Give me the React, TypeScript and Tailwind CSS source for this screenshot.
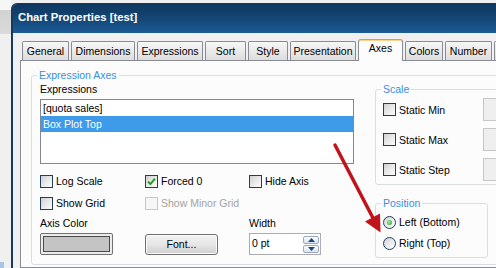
import clsx from 'clsx'

const tabs = [
  { label: 'General', width: 'w-[47px]' },
  { label: 'Dimensions', width: 'w-[64px]' },
  { label: 'Expressions', width: 'w-[66px]' },
  { label: 'Sort', width: 'w-[41px]' },
  { label: 'Style', width: 'w-[40px]' },
  { label: 'Presentation', width: 'w-[66px]' },
  { label: 'Axes', width: 'w-[45px]', active: true },
  { label: 'Colors', width: 'w-[38px]' },
  { label: 'Number', width: 'w-[47px]' },
  { label: '', width: 'w-[40px]' },
]

function Tab({ label, width, active }: { label: string; width: string; active?: boolean }) {
  if (active) {
    return (
      <div
        className={clsx(
          width,
          'relative -mb-px h-[22px] shrink-0 rounded-t-[3px] border-x border-t border-x-[#898c95] border-t-[#e39b33] bg-[#fcfcfc] text-center leading-[17px] shadow-[inset_0_1px_0_#fbd48c]'
        )}
      >
        {label}
      </div>
    )
  }
  return (
    <div
      className={clsx(
        width,
        'h-[19px] shrink-0 rounded-t-[2px] border-x border-t border-[#898c95] bg-gradient-to-b from-[#f7f7f7] to-[#dddddd] text-center leading-[18px]'
      )}
    >
      {label}
    </div>
  )
}

function CheckBox({ checked = false, disabled = false }: { checked?: boolean; disabled?: boolean }) {
  return (
    <span
      className={clsx(
        'flex h-[13px] w-[13px] shrink-0 items-center justify-center border',
        disabled
          ? 'border-[#c8c8c8] bg-[#f6f6f6]'
          : 'border-[#1d3f63] bg-gradient-to-br from-[#d0d0d0] via-[#e9e9e9] to-[#fdfdfd]'
      )}
    >
      {checked && (
        <svg width="9" height="9" viewBox="0 0 9 9">
          <path d="M1 4.6 L3.4 7 L8 1.6" fill="none" stroke="#1f9c1f" strokeWidth="1.9" />
        </svg>
      )}
    </span>
  )
}

function Radio({ checked = false }: { checked?: boolean }) {
  return (
    <span className="flex h-[13px] w-[13px] shrink-0 items-center justify-center rounded-full border border-[#1d3f63] bg-gradient-to-br from-[#d0d0d0] via-[#ececec] to-[#fdfdfd]">
      {checked && (
        <span className="h-[5px] w-[5px] rounded-full bg-[radial-gradient(circle_at_40%_40%,#9af29a,#1e9a1e)]" />
      )}
    </span>
  )
}

function Option({ label, checked, disabled }: { label: string; checked?: boolean; disabled?: boolean }) {
  return (
    <div className="flex h-[14px] items-center">
      <CheckBox checked={checked} disabled={disabled} />
      <span className={clsx('ml-[3px] leading-[14px]', disabled && 'text-[#a3a3a3]')}>{label}</span>
    </div>
  )
}

function SpinArrow({ up }: { up?: boolean }) {
  return (
    <span className="flex h-[8px] w-[16px] items-center justify-center rounded-[2px] border border-[#9aa9bd] bg-gradient-to-b from-white to-[#d8e2ee]">
      <svg width="7" height="4" viewBox="0 0 7 4">
        <polygon points={up ? '0,4 3.5,0 7,4' : '0,0 3.5,4 7,0'} fill="#1c4677" />
      </svg>
    </span>
  )
}

export default function App() {
  return (
    <div className="relative flex h-[268px] w-[496px] overflow-hidden bg-[#f0f0f0] font-['Liberation_Sans',Arial,sans-serif] text-[10.5px] text-black">
      {/* desktop behind the dialog */}
      <div className="flex w-[11px] shrink-0 flex-col">
        <div className="h-[10px] bg-[#f6f6f6]" />
        <div className="h-[24px] bg-gradient-to-b from-[#d2d2d2] to-[#dadada]" />
        <div className="flex flex-1 flex-col justify-end bg-[#f0f0f0]">
          <div className="h-[6px] w-[4px] bg-[#a7c5e4]" />
        </div>
      </div>

      {/* dialog window */}
      <div className="mt-[3px] flex w-[540px] shrink-0 flex-col rounded-tl-[6px] border-l-2 border-t border-[#17395f] bg-[#f0f0f0]">
        <div className="flex h-[29px] items-center rounded-tl-[4px] bg-gradient-to-b from-[#0e375f] via-[#144675] to-[#1c5b97] pb-[2px] pl-[5px] text-[11.3px] font-bold text-white">
          Chart Properties [test]
        </div>

        <div className="flex flex-1 flex-col pl-[7px] pt-[6px]">
          <div className="relative z-10 flex h-[21px] items-end gap-[2px] pl-[2px]">
            {tabs.map((t, i) => (
              <Tab key={i} label={t.label} width={t.width} active={t.active} />
            ))}
          </div>

          <div className="flex-1 border border-[#898c95] bg-[#fcfcfc] pl-[10px] pt-[7px]">
            <fieldset className="w-[500px] rounded-[3px] border border-[#d5dfe5] pb-[6px] pl-[8px]">
              <legend className="-ml-[3px] px-[2px] leading-[14px] text-[#3d8ee0]">Expression Axes</legend>
              <div className="flex">
                {/* left column */}
                <div className="w-[335px] shrink-0">
                  <div className="h-[14px] leading-[14px]">Expressions</div>
                  <div className="mt-[3px] h-[65px] w-[314px] border border-[#828790] bg-white">
                    <div className="h-[16px] px-[2px] leading-[16px]">[quota sales]</div>
                    <div className="h-[16px] bg-[#3d9be9] px-[2px] leading-[16px] text-white">Box Plot Top</div>
                  </div>

                  <div className="mt-[10px] grid grid-cols-[105px_104px_1fr]">
                    <Option label="Log Scale" />
                    <Option label="Forced 0" checked />
                    <Option label="Hide Axis" />
                  </div>
                  <div className="mt-[8px] grid grid-cols-[105px_104px_1fr]">
                    <Option label="Show Grid" />
                    <Option label="Show Minor Grid" disabled />
                  </div>
                  <div className="mt-[6px] grid grid-cols-[105px_104px_1fr] leading-[14px]">
                    <span>Axis Color</span>
                    <span />
                    <span>Width</span>
                  </div>
                  <div className="mt-[3px] grid grid-cols-[105px_104px_1fr]">
                    <div className="flex h-[22px] w-[73px] items-center justify-center rounded-[2px] border border-[#707070] bg-[#ececec] p-[2px]">
                      <div className="h-full w-full border border-[#4a4a4a] bg-[#c4c4c4]" />
                    </div>
                    <div className="mt-px flex h-[21px] w-[73px] items-center justify-center rounded-[3px] border border-[#707070] bg-gradient-to-b from-[#f3f3f3] via-[#e6e6e6] to-[#cfcfcf] shadow-[inset_0_0_0_1px_#fbfbfb]">
                      Font...
                    </div>
                    <div className="flex h-[22px] w-[72px] items-center border border-[#abadb3] bg-white">
                      <span className="flex-1 pb-[2px] pl-[2px] leading-[14px]">0 pt</span>
                      <div className="mr-px flex flex-col gap-px">
                        <SpinArrow up />
                        <SpinArrow />
                      </div>
                    </div>
                  </div>
                </div>

                {/* right column */}
                <div className="flex flex-col">
                  <fieldset className="w-[150px] rounded-[3px] border border-[#d5dfe5] pb-[3px] pl-[7px]">
                    <legend className="-ml-[2px] px-[2px] leading-[14px] text-[#3d8ee0]">Scale</legend>
                    <div className="mt-[2px] flex flex-col gap-[7px]">
                      {['Static Min', 'Static Max', 'Static Step'].map((s) => (
                        <div key={s} className="flex h-[23px] items-center">
                          <CheckBox />
                          <span className="ml-[3px] w-[84px] leading-[14px]">{s}</span>
                          <div className="h-[23px] w-[60px] border border-[#c6c6c6] bg-[#efefef]" />
                        </div>
                      ))}
                    </div>
                  </fieldset>

                  <fieldset className="mt-[11px] w-[113px] rounded-[3px] border border-[#d5dfe5] pb-[5px] pl-[7px]">
                    <legend className="-ml-[2px] px-[2px] leading-[14px] text-[#3d8ee0]">Position</legend>
                    <div className="mt-[3px] flex flex-col gap-[3px]">
                      <div className="flex h-[18px] items-center">
                        <Radio checked />
                        <span className="ml-[3px] leading-[14px]">Left (Bottom)</span>
                      </div>
                      <div className="flex h-[18px] items-center">
                        <Radio />
                        <span className="ml-[3px] leading-[14px]">Right (Top)</span>
                      </div>
                    </div>
                  </fieldset>
                </div>
              </div>
            </fieldset>
          </div>
        </div>
      </div>

      {/* red annotation arrow */}
      <svg className="pointer-events-none absolute left-0 top-0" width="496" height="268" viewBox="0 0 496 268">
        <line x1="335" y1="145" x2="373" y2="218" stroke="#c1131b" strokeWidth="3.5" strokeLinecap="round" />
        <polygon points="380.5,232.5 365,221.5 380,213.5" fill="#c1131b" />
      </svg>
    </div>
  )
}
